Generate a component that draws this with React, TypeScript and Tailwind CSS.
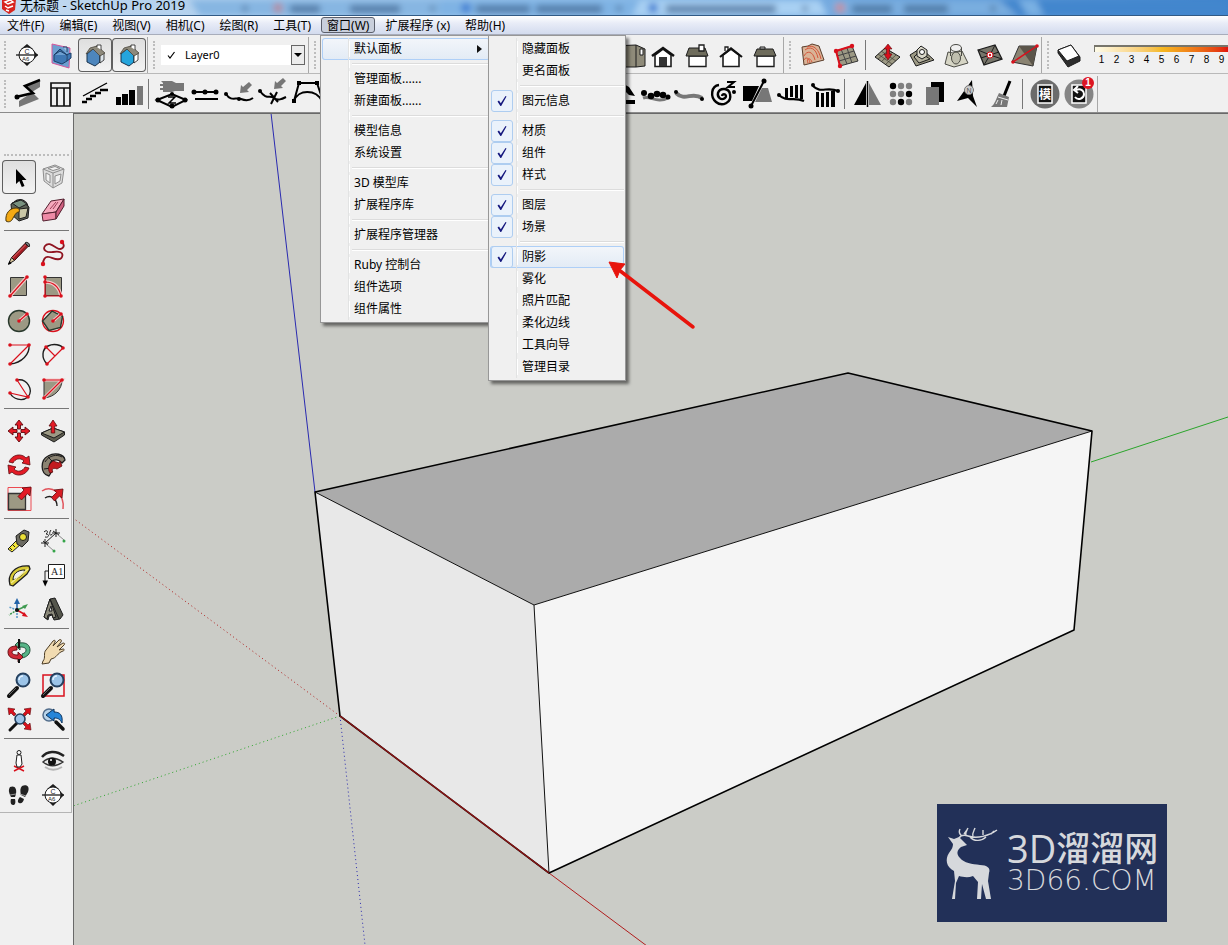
import React from "react";

type IconMap = Record<string, React.ReactNode>;

const RED = "#d9101c";
const STONE = "#9c9984";
const INK = "#1d1d1d";

function Dots({ at, r = 1.8 }: { at: number[][]; r?: number }) {
  return (
    <>
      {at.map(([x, y]) => (
        <circle key={`${x}-${y}`} cx={x} cy={y} r={r} fill={RED} />
      ))}
    </>
  );
}

function Sectioning() {
  return (
    <g>
      <path d="M17 6l6 5H11zM28 17l-5-5v10zM17 28l3-3h-6z" fill={INK} />
      <circle cx="17" cy="17" r="8" fill="#fff" stroke={INK} />
      <path d="M6 17h22" stroke={INK} strokeWidth="1.300" />
      <text x="14.500" y="15.500" fontSize="7" fontFamily="Liberation Sans" fill={INK}>C</text>
      <text x="12" y="23" fontSize="6" fontFamily="Liberation Sans" fill={INK}>A6</text>
    </g>
  );
}

function Home({ body, side }: { body: string; side: string }) {
  return (
    <g strokeLinejoin="round">
      <path d="M15 11 9 16v8l8 4 5-4v-7z" fill={body} stroke="#17324d" />
      <path d="M22 17l4-2v7l-4 3z" fill={side} stroke={INK} strokeWidth=".8" />
      <path d="M12 10l7-2 8 7-5 3-7-7-7 5z" fill="#8d897b" stroke="#4a463c" strokeWidth=".8" />
      <path d="M19 9V7h4v5" fill="#fff" stroke={INK} strokeWidth=".8" />
    </g>
  );
}

function Lens() {
  return (
    <g>
      <path d="M7 28l8-8" stroke="#111" strokeWidth="4" strokeLinecap="round" />
      <path d="M7 27l7-7" stroke="#666" strokeWidth="1" />
      <circle cx="21" cy="12" r="6.500" fill="#9cc4e8" stroke="#24405f" strokeWidth="2" />
      <path d="M17 12a4 4 0 0 1 4-4" stroke="#e6f3ff" strokeWidth="1.500" fill="none" />
    </g>
  );
}

const sideIcons: IconMap = {
  select: <path d="M14 9v15l3.300-3 2.500 6 2.700-1-2.500-6h4.500z" fill="#000" />,
  component: (
    <g fill="#dcdcdc" stroke="#8e8e8e" strokeWidth="1" strokeLinejoin="round">
      <path d="M7 9l12-4 9 4-2 14-9 5-9-7z" />
      <path d="M7 9l10 4 11-4M17 13v15" fill="none" />
      <path d="M10 13l4 2v8l-4-3zM19 16l6-2-1 7-5 3zM12 8.500l7-2 5 2-7 2z" fill="#f3f3f3" />
    </g>
  ),
  bucket: (
    <g strokeLinejoin="round">
      <path d="M12 8c7-5 15-1 14 8" fill="none" stroke={INK} strokeWidth="1.200" />
      <path d="M9 10l9-4 9 7-1 11-9 3-7-6z" fill="#5e6459" stroke={INK} />
      <path d="M17 15l9-1-2 9-7 2z" fill="#c9c7a6" stroke={INK} />
      <path d="M10 9l9-3 6 4-8 4z" fill="#78917f" stroke={INK} />
      <path d="M4 27c-1-8 4-13 10-13 3 0 4 2 3 4-3 0-4 3-6 6-1 3-4 5-7 3z" fill="#f3a914" stroke="#4c3608" />
    </g>
  ),
  eraser: (
    <g stroke="#53202f" strokeLinejoin="round">
      <path d="M6 20l9-13 13-2-8 13z" fill="#f6a9bd" />
      <path d="M6 20l14-2v7L7 27z" fill="#ee8aa6" />
      <path d="M20 18l8-13v7l-8 13z" fill="#cf5f7f" />
      <path d="M14 15l6-7M17 15l5-7" stroke="#9b3c57" />
    </g>
  ),
  pencil: (
    <g strokeLinejoin="round">
      <path d="M9.500 21.500 23 7.500l3 3-13.500 14z" fill="#a51c24" stroke="#3b0d0d" />
      <path d="M10.500 22 24 8.500" stroke="#e06a6a" />
      <path d="M23 7c2-2 6 1 4 4z" fill="#777" stroke={INK} />
      <path d="M6.500 28l3-6.500 3 3z" fill="#d8c39a" stroke={INK} />
      <path d="M6 29l1.500-4 2 2.500z" fill="#000" />
    </g>
  ),
  freehand: (
    <g>
      <path d="M26 6c4 4 0 9-5 6s-9-6-12-2 2 7 8 6 11 0 9 5-9 1-13 0-6 3-6 7" fill="none" stroke="#8f1420" strokeWidth="1.800" />
      <Dots at={[[26, 6], [7, 28]]} r={2.2} />
    </g>
  ),
  rectangle: (
    <g>
      <path d="M8.500 7.500h16v18h-16z" fill={STONE} stroke="#333" />
      <path d="M8 26 25 7" stroke="#f3c9c9" strokeWidth="3.500" />
      <path d="M8 26 25 7" stroke={RED} strokeWidth="1.200" />
      <Dots at={[[8, 26], [25, 7]]} />
    </g>
  ),
  rotated: (
    <g>
      <path d="M9.500 7.500h16v18h-16z" fill={STONE} stroke="#333" />
      <path d="M9 12c9 0 14 5 16 14" fill="none" stroke="#f3c9c9" strokeWidth="3.500" />
      <path d="M9 7v19h16c-2-9-7-14-16-14" fill="none" stroke={RED} strokeWidth="1.200" />
      <Dots at={[[9, 7], [9, 12], [9, 26], [25, 26]]} />
    </g>
  ),
  circle: (
    <g>
      <circle cx="17" cy="17" r="10.500" fill={STONE} stroke="#28382c" strokeWidth="1.400" />
      <path d="M17 17l8-7" stroke="#f3c9c9" strokeWidth="3" />
      <path d="M17 17l8-7" stroke={RED} strokeWidth="1.200" />
      <Dots at={[[17, 17], [25, 10]]} />
    </g>
  ),
  polygon: (
    <g>
      <circle cx="17" cy="17" r="10.500" fill="none" stroke={RED} strokeWidth="1.300" />
      <path d="M16 7l10.500 5.500-2 11L13 26.500 6.500 17z" fill={STONE} stroke="#28382c" strokeWidth="1.400" />
      <path d="M17 17l8-7" stroke="#f3c9c9" strokeWidth="3" />
      <path d="M17 17l8-7" stroke={RED} strokeWidth="1.200" />
      <Dots at={[[17, 17], [25, 10]]} />
    </g>
  ),
  arc: (
    <g fill="none">
      <path d="M27 7c1 9-7 18-19 19" stroke={INK} strokeWidth="1.300" />
      <path d="M8 7h19L8 26" stroke={RED} strokeWidth="1.200" />
      <Dots at={[[8, 7], [27, 7], [8, 26]]} />
    </g>
  ),
  twoPointArc: (
    <g fill="none">
      <path d="M11 26C5 20 6 11 12 8s13-1 15 2" stroke={INK} strokeWidth="1.400" />
      <path d="M27 10 11 26M10 9l9 9" stroke={RED} strokeWidth="1.200" />
      <Dots at={[[10, 9], [27, 10], [11, 26]]} />
    </g>
  ),
  threePointArc: (
    <g fill="none">
      <path d="M15 8c10-2 17 10 11 17-6 5-15 2-18-4" stroke={INK} strokeWidth="1.300" />
      <path d="M15 8l11 17L8 21" stroke={RED} strokeWidth="1.200" />
      <Dots at={[[15, 8], [8, 21], [26, 25]]} />
    </g>
  ),
  pie: (
    <g>
      <path d="M8 8h18c0 9-7 17-18 18z" fill={STONE} stroke="#333" />
      <path d="M8 26 26 8H8" stroke="#f3c9c9" strokeWidth="3" fill="none" />
      <path d="M8 26 26 8H8" stroke={RED} strokeWidth="1.200" fill="none" />
      <Dots at={[[8, 8], [26, 8], [8, 26]]} />
    </g>
  ),
  move: (
    <path
      d="M17 6l4 5h-2.500v4h-3v-4H13zM17 28l-4-5h2.500v-4h3v4H21zM6 17l5-4v2.500h4v3h-4V21zM28 17l-5 4v-2.500h-4v-3h4V13z"
      fill="#e31b26"
      stroke="#5e0a0e"
      strokeWidth=".9"
    />
  ),
  pushPull: (
    <g strokeLinejoin="round">
      <path d="M5.500 19 17 14l11.500 4v3L18 28 5.500 21z" fill="#5f5e50" stroke={INK} />
      <path d="M5.500 19 17 14l11.500 4L18 24z" fill={STONE} stroke={INK} />
      <path d="M17 6l4 6h-2.300v7h-3.400v-7H13z" fill="#e31b26" stroke="#5e0a0e" strokeWidth=".8" />
    </g>
  ),
  rotate: (
    <g fill="#e31b26" stroke="#5e0a0e" strokeWidth=".8" strokeLinejoin="round">
      <path d="M7 14c3-8 13-9 17-4l3-2 1 9-8-2 2-2c-4-4-9-2-11 2z" />
      <path d="M27 20c-3 8-13 9-17 4l-3 2-1-9 8 2-2 2c4 4 9 2 11-2z" />
    </g>
  ),
  followMe: (
    <g strokeLinejoin="round">
      <path d="M13 28C4 26 4 12 12 8c7-4 16-2 17 4l-3 3c-3-4-8-4-11-1-3 4-1 7 1 9z" fill="#8b8372" stroke={INK} strokeWidth="1.300" />
      <path d="M9 14c4-7 12-8 17-5M8 21l7-1M12 9l4 4" fill="none" stroke={INK} />
      <path d="M14 16l3-3 6 2 1-2 2 5-5 3c-4-2-6 1-4 3l-3 1c-2-3-2-6 0-9z" fill="#c21b20" stroke="#5e0a0e" strokeWidth=".8" />
    </g>
  ),
  scale: (
    <g>
      <path d="M6 5.500h23v23H6V5.500" fill="none" stroke="#ec4a52" />
      <path d="M6.500 11.500h17v16h-17z" fill={STONE} stroke="#333" strokeWidth="1.300" />
      <path d="M29 5l-1 9-2.500-2.300-6 6.300-3.500-3.500 6-6.500L20 6z" fill="#e31b26" stroke="#5e0a0e" strokeWidth=".8" />
    </g>
  ),
  offset: (
    <g fill="none">
      <path d="M6 9c9-6 23 2 21 18" stroke="#e1525a" strokeWidth="1.500" />
      <path d="M9 16c6-4 12 1 12 8" stroke={INK} strokeWidth="1.400" />
      <path d="M27 7l-1 9-2.500-2-5 5-3-3.500 5-5L18 8z" fill="#d81c24" stroke="#5e0a0e" strokeWidth=".8" />
    </g>
  ),
  tape: (
    <g strokeLinejoin="round">
      <path d="M15 16l4 4-9 8-4-3z" fill="#f2e53c" stroke={INK} />
      <path d="M14 12l8-6 5 2-1 9-6 6-5-3z" fill="#6b6a62" stroke={INK} />
      <circle cx="21" cy="13" r="3.500" fill="#eade37" stroke={INK} />
      <path d="M8 24l2 2M11 21l2 2" stroke={INK} />
    </g>
  ),
  dimension: (
    <g stroke={INK} fill="none">
      <path d="M9 19 20 9M7 17l5 4M17 7l6 4M20 5v8M9 15v8M16 9h8M5 19h8" />
      <path d="M10 20l8 7M21 10l7 6" stroke="#888" />
      <path d="M8 8c3-3 5 0 2 2 4 0 3 4-1 3M15 6c-3 4 0 7 1 4" />
      <circle cx="18" cy="27" r="1.500" fill="#36a44a" stroke="none" />
      <circle cx="28" cy="17" r="1.500" fill="#36a44a" stroke="none" />
    </g>
  ),
  protractor: (
    <g strokeLinejoin="round">
      <path d="M8 27C5 17 12 7 27 8l1 3-3 5-14 12z" fill="#d9cb36" stroke={INK} strokeWidth="1.300" />
      <path d="M11 22c0-6 4-10 12-10-2 5-6 8-12 10z" fill="#f0f0f0" stroke={INK} />
      <path d="M9 25 26 11" stroke="#f7ef91" strokeWidth="1.200" />
    </g>
  ),
  text: (
    <g>
      <path d="M12.500 6.500h16v14h-16z" fill="#fff" stroke={INK} />
      <text x="15" y="17" fontSize="10" fontFamily="Liberation Serif" fill={INK}>A1</text>
      <path d="M12 13h-3v10" fill="none" stroke={INK} />
      <path d="M6.500 22.500h5.500l-2.800 6z" fill="#000" />
    </g>
  ),
  axes: (
    <g strokeWidth="1.500">
      <path d="M15 18V9" stroke="#2363a8" />
      <path d="M15 6l3 6h-6z" fill="#2363a8" />
      <path d="M15 18l7-3" stroke="#3f9a50" />
      <path d="M26 12l-3 5-3-3z" fill="#3f9a50" />
      <path d="M15 18l7 4" stroke={RED} />
      <path d="M26 25l-6-1 2-4z" fill={RED} />
      <path d="M15 18v9M15 18l-8-3" stroke="#5798c8" strokeDasharray="2 1" />
      <path d="M15 18l-8 5" stroke="#3f9a50" strokeDasharray="2 1" />
      <circle cx="15" cy="18" r="2" fill="#111" />
    </g>
  ),
  text3d: (
    <g strokeLinejoin="round" stroke={INK}>
      <path d="M8 25l6-18 5-1 8 17-3 4-6 1-2-5-3 1-1 4z" fill="#55564c" />
      <path d="M8 25l6-18 6 18-3 1-1-4-4 1-1 4z" fill="#8b897a" />
      <path d="M13 19l2-5 1 5z" fill="#f0f0f0" />
      <path d="M14 7l9 20" fill="none" />
    </g>
  ),
  orbit: (
    <g strokeLinejoin="round">
      <path d="M18 9c6-1 10 2 10 7 0 4-3 7-8 8v-4c3-1 4-2 4-4 0-2-2-3-6-3v3l-5-5 5-5z" fill="#57b487" stroke="#174530" strokeWidth=".9" />
      <path d="M15 12c-6 0-9 2-9 6 0 5 4 7 10 7v3l5-5-5-5v3c-4 0-6-1-6-3 0-1 2-2 5-2z" fill="#cf2a36" stroke="#5e0a0e" strokeWidth=".9" />
      <path d="M17 5v9M17 25v4" stroke="#111" strokeWidth="2" />
    </g>
  ),
  pan: (
    <path
      d="M7 27c3-3 0-8 3-11l7-9c1-1 3-1 2 1l-2 4 6-6c2-1 3 0 2 2l-4 5 6-4c2 0 2 1 1 2l-5 5 4-1c2 0 1 2 0 2-6 2-6 7-12 8l-2 4-7 1z"
      fill="#f1dbb1"
      stroke="#4b3c26"
      strokeLinejoin="round"
    />
  ),
  zoom: <Lens />,
  zoomWindow: (
    <g>
      <path d="M7 7h21v21H7z" fill="none" stroke={RED} strokeWidth="1.500" />
      <Lens />
    </g>
  ),
  zoomExtents: (
    <g>
      <path d="M8 28l7-7" stroke="#111" strokeWidth="3" strokeLinecap="round" />
      <circle cx="18" cy="17" r="5" fill="#9cc4e8" stroke="#24405f" strokeWidth="1.600" />
      <path d="M6 6l7 1-2 2 3 3-2 2-3-3-2 2zM29 6l-7 1 2 2-3 3 2 2 3-3 2 2zM29 28l-7-1 2-2-3-3 2-2 3 3 2-2z" fill={RED} stroke="#5e0a0e" strokeWidth=".6" />
    </g>
  ),
  previous: (
    <g>
      <circle cx="13" cy="13" r="6" fill="#b9d4ea" stroke="#526d8b" strokeWidth="1.500" />
      <path d="M20 20l7 7" stroke="#111" strokeWidth="3.500" strokeLinecap="round" />
      <path d="M10 13l8-6v3c6 0 9 3 8 11-2-4-4-5-8-5v3z" fill="#2685d8" stroke="#113760" strokeLinejoin="round" />
    </g>
  ),
  position: (
    <g>
      <path d="M12 27l10-5M12 22l10 5" stroke={RED} strokeWidth="1.500" />
      <path d="M15 11h4l1 9-2 3h-3l-1-4z" fill="#fff" stroke={INK} />
      <circle cx="17" cy="8.500" r="2" fill="#fff" stroke={INK} />
    </g>
  ),
  look: (
    <g>
      <path d="M6 13c5-6 14-7 22-1" fill="none" stroke="#222" strokeWidth="2.500" />
      <path d="M7 18c5-5 13-5 20 0-7 5-14 5-20 0z" fill="#e4e4e4" stroke="#333" strokeWidth="1.400" />
      <circle cx="16" cy="17.500" r="4" fill="#111" />
      <circle cx="15" cy="16" r="1" fill="#fff" />
      <path d="M9 23c6 4 12 3 17 0" fill="none" stroke="#b5b5b5" strokeWidth="2" />
    </g>
  ),
  walk: (
    <g fill="#222">
      <path d="M8 9c5-2 7 2 6 7l-1 3H9c-2-4-3-7-1-10zM9 21l4 0c1 4 0 6-2 6s-3-3-2-6z" />
      <path d="M20 8c5-2 8 1 6 6l-3 5-4-2c-1-4-1-7 1-9zM18 19l4 2c-1 4-3 5-5 4s-1-4 1-6z" />
      <path d="M8 17l6-1M18 16l6 2" stroke="#999" />
    </g>
  ),
  section: <Sectioning />,
};

const topIcons: IconMap = {
  section: <Sectioning />,
  planes: (
    <g>
      <path d="M8 6l18 4-1 20L8 25z" fill="#6d9fd0" stroke="#d8569a" />
      <path d="M16 11l-6 6v6l8 3 5-3v-6zM22 17l5-2v5l-4 3M10 17l6-4 7 4" fill="#3f78b4" stroke="#1c3f68" />
      <path d="M19 9h4v5" fill="#9cc0df" stroke="#1c3f68" />
    </g>
  ),
  cuts: <Home body="#4d86bd" side="#dce4ea" />,
  fill: <Home body="#25a5dc" side="#fff" />,
  iso: (
    <g>
      <path d="M0 8l24-1 9 4v17l-9 1H0z" fill="#8f8b7a" stroke={INK} />
      <path d="M24 7v22" stroke={INK} />
      <path d="M28 11h3v6h-3z" fill="#fff" stroke={INK} />
    </g>
  ),
  front: (
    <g>
      <path d="M9 17v11.500h16V17l-8-6z" fill="#fff" stroke={INK} strokeWidth="1.600" />
      <path d="M6 18l11-8 11 8" fill="none" stroke="#111" strokeWidth="2.600" />
      <path d="M13 19h8v9h-8z" fill="#333" />
    </g>
  ),
  right: (
    <g>
      <path d="M9 18h17v10.500H9z" fill="#fff" stroke={INK} strokeWidth="1.400" />
      <path d="M9 10h16l3 8H6z" fill="#6e6c5c" stroke={INK} />
      <path d="M19 7h5v6h-5z" fill="#fff" stroke={INK} strokeWidth="1.300" />
    </g>
  ),
  back: (
    <g>
      <path d="M9 17v11.500h16V17l-8-6z" fill="#fff" stroke={INK} strokeWidth="1.600" />
      <path d="M11 13V9h3v3" fill="#fff" stroke={INK} strokeWidth="1.300" />
      <path d="M6 19l11-8.500L28 19" fill="none" stroke="#111" strokeWidth="2.200" />
    </g>
  ),
  left: (
    <g>
      <path d="M9 18h17v10.500H9z" fill="#fff" stroke={INK} strokeWidth="1.400" />
      <path d="M9 11h16l3 7H6z" fill="#6e6c5c" stroke={INK} />
      <path d="M12 9h5v2h-5z" fill="#ccc" stroke={INK} />
    </g>
  ),
  contours: (
    <g strokeLinejoin="round">
      <path d="M7 9l6-1 4-2 7 2 5 14-8 2-12 3z" fill="#d9b397" stroke="#5a3d2b" />
      <path d="M10 12c5-4 11-2 13 8M9 18c3-6 9-5 11 4M13 25c-2-5 2-6 4-1M12 9c7-3 12 3 14 12M9 22c1-3 5-3 6 3" fill="none" stroke="#d5553b" />
    </g>
  ),
  grid: (
    <g>
      <path d="M7 13l16-5 6 15-18 5z" fill={STONE} stroke="#333" />
      <path d="M12 11l6 15M18 10l5 15M8 18l17-5M10 23l17-5" stroke="#444" />
      <path d="M11 28 7 13l16-5" stroke={RED} strokeWidth="2" fill="none" />
      <Dots at={[[7, 13], [23, 8], [11, 28]]} r={2.2} />
    </g>
  ),
  smoove: (
    <g>
      <path d="M4 19l10-9 15 9-11 10z" fill={STONE} stroke={INK} />
      <path d="M7 21l11-9M11 23l10-9M15 26l10-9M7 16l14 10M10 13l15 10" stroke="#3d3b31" strokeWidth=".7" />
      <path d="M17 6l4 5h-2.500v5H21l-4 6-4-6h2.500v-5H13z" fill={RED} stroke="#5e0a0e" strokeWidth=".6" />
    </g>
  ),
  stamp: (
    <g stroke={INK} strokeLinejoin="round">
      <path d="M5 17l11-7 13 12-18 6z" fill={STONE} />
      <path d="M9 19l5-5 11 7-11 4z" fill="#b5b29f" />
      <path d="M12 12l4-4 6 4v6l-5 3-5-3z" fill="#d8d6c8" />
      <circle cx="17" cy="14" r="2.500" fill="#fff" />
    </g>
  ),
  drape: (
    <g stroke="#4a4a44">
      <path d="M9 14l5 1 9-2 6 12-14 4-9-3z" fill="#d6d5c5" />
      <ellipse cx="17" cy="10" rx="5.500" ry="3.500" fill="none" />
      <ellipse cx="17" cy="20" rx="4.500" ry="6" fill="#bfbeae" />
      <path d="M11.500 10v8M22.500 10v8" />
    </g>
  ),
  detail: (
    <g>
      <path d="M5 12l17-5 7 14-18 6z" fill="#77756a" stroke={INK} strokeWidth="1.300" />
      <path d="M17 17 5 12M17 17l5-10M17 17l12 4M17 17l-6 10M8 20l9-3M17 17l9-3" stroke={INK} />
      <circle cx="17" cy="17" r="3" fill="#fff" stroke={RED} />
      <circle cx="17" cy="17" r="1.200" fill={RED} />
    </g>
  ),
  flip: (
    <g>
      <path d="M12 8l18 0-4 20L5 24z" fill="#8a8372" stroke="#333" />
      <path d="M12 8l14 20 4-20z" fill="#5b554a" />
      <path d="M6 24 30 8" stroke={RED} strokeWidth="1.500" />
      <Dots at={[[6, 24], [30, 8]]} />
    </g>
  ),
  shadow: (
    <g strokeLinejoin="round">
      <path d="M5 12 18 7l9 12v4l-12 6L5 15z" fill="#2d2d2d" stroke={INK} />
      <path d="M5 12 18 7l8 11-12 5z" fill="#fff" stroke={INK} />
    </g>
  ),
};

const pluginIcons: IconMap = {
  bend: (
    <g>
      <path d="M9 24v6l20-8-7-7 8-5V4l-14 5 7 6z" fill="#777" />
      <path d="M6 20l17-4-8-7 15-6" fill="none" stroke="#000" strokeWidth="2.500" />
      <circle cx="7" cy="20" r="2.500" />
    </g>
  ),
  window: <path d="M7 6h19v23H7zM7 11h19M13 11v18M20 11v18" fill="none" stroke="#111" strokeWidth="1.700" />,
  stairs: (
    <g fill="none" stroke="#000">
      <path d="M5 19 29 6" strokeWidth="1.400" />
      <path d="M4 25h5M8 22h6M12 19h6M17 16h6M22 13h8" strokeWidth="2.600" />
    </g>
  ),
  bars: (
    <g>
      <path d="M4 20h5v8H4zM10 17h6v11h-6zM17 13h6v15h-6z" />
      <path d="M25 9h6v19h-6z" fill="#777" />
    </g>
  ),
  hand: (
    <g>
      <path d="M7 4h11l4 2h8v8h-9l-3 1H9v-2H6v-2h3V9H6V7h3V6z" fill="#777" />
      <path d="M3 23l15-6 14 6-14 7z" fill="none" stroke="#000" strokeWidth="2" />
      <path d="M14 20h7l-6 6h7" fill="none" stroke="#000" strokeWidth="1.500" />
      <circle cx="4" cy="23" r="2.500" /><circle cx="31" cy="23" r="2.500" /><circle cx="18" cy="29" r="2.500" /><circle cx="18" cy="17" r="2" />
    </g>
  ),
  lines: (
    <g stroke="#000" strokeWidth="2">
      <path d="M5 15h25M7 22h23" />
      <circle cx="6" cy="15" r="1.500" /><circle cx="17" cy="15" r="1.500" /><circle cx="28" cy="15" r="1.500" />
    </g>
  ),
  curve: (
    <g>
      <path d="M4 17c5 8 10 3 15 5s8 2 12-1" fill="none" stroke="#000" strokeWidth="2" />
      <path d="M30 8l-5 5 2 2-9 1 1-8 2 2 6-5z" fill="#777" />
      <circle cx="4" cy="17" r="2" /><circle cx="17" cy="22" r="2" />
    </g>
  ),
  split: (
    <g>
      <path d="M4 14c6 9 10 4 14 7s8 1 12-1M14 16l8 9M21 15l-6 12" fill="none" stroke="#000" strokeWidth="2" />
      <path d="M30 4l-5 5 2 2-9 1 1-8 2 2 6-5z" fill="#777" />
      <circle cx="4" cy="14" r="2" />
    </g>
  ),
  lattice: (
    <g fill="none" stroke="#000" strokeWidth="2">
      <path d="M9 6h18l6 18M9 6 4 24M4 24c4-12 22-12 28 0" />
      <path d="M7 4h4v4H7zM25 4h4v4h-4zM2 22h4v4H2zM31 22h3v4h-3z" fill="#000" stroke="none" />
    </g>
  ),
  fragment: <path d="M18 6l7 4 6 9-6-1-7-7zM22 23h9v4h-9z" />,
  beads: (
    <g>
      <path d="M5 21c7-3 14 6 25 0" fill="none" stroke="#777" strokeWidth="3" />
      <circle cx="6" cy="16" r="3" /><circle cx="13" cy="19" r="3.300" /><circle cx="19" cy="17" r="3.300" /><circle cx="25" cy="18" r="3.300" /><circle cx="30" cy="20" r="2.500" />
    </g>
  ),
  pipe: (
    <g>
      <path d="M4 16c9 9 16-2 26 5" fill="none" stroke="#777" strokeWidth="4" />
      <circle cx="4" cy="15" r="2" /><circle cx="30" cy="22" r="2" />
    </g>
  ),
  spiral: (
    <g fill="none" stroke="#000">
      <path d="M16 19a2 2 0 1 1 3 2c-4 3-8-1-7-5 2-6 11-5 12 1 2 9-8 13-14 8S5 9 13 8" strokeWidth="2.400" />
      <path d="M21 5h7l-6 5h7" strokeWidth="2" />
      <circle cx="28" cy="15" r="2" fill="#000" stroke="none" />
    </g>
  ),
  cut: (
    <g>
      <path d="M3 9h16l-7 15H3z" />
      <path d="M22 11h6l4 14H15z" fill="#777" />
      <path d="M24 4 11 29" stroke="#000" strokeWidth="2" />
      <circle cx="24" cy="4" r="2.500" /><circle cx="11" cy="29" r="2.500" />
    </g>
  ),
  fenceDown: (
    <g>
      <path d="M5 18c8 8 14 1 25 6" fill="none" stroke="#000" strokeWidth="2.200" />
      <path d="M11 11h3v10h-3zM16 9h3v11h-3zM21 8h3v13h-3zM26 8h3v14h-3z" />
      <circle cx="5" cy="18" r="2" />
    </g>
  ),
  fenceUp: (
    <g>
      <path d="M5 9c8 8 14 0 25 5" fill="none" stroke="#000" strokeWidth="2.200" />
      <path d="M8 15h3v15H8zM13 16h3v14h-3zM18 15h3v15h-3zM23 14h4v16h-4z" />
      <circle cx="5" cy="8" r="2" /><circle cx="30" cy="14" r="2" />
    </g>
  ),
  mirror: (
    <g>
      <path d="M16 6v22H4z" />
      <path d="M19 6v22h12z" fill="#777" />
      <path d="M17.500 4v26" stroke="#000" strokeWidth="1.500" />
    </g>
  ),
  dots: (
    <g>
      {[9, 17, 25].map((y, r) =>
        [9, 17, 25].map((x, c) => (
          <circle key={`${x}-${y}`} cx={x} cy={y} r="3.200" fill={[0, 5, 7].includes(r * 3 + c) ? "#000" : "#808080"} />
        )),
      )}
    </g>
  ),
  copy: (
    <g>
      <path d="M13 5h13v20H13z" />
      <path d="M8 10h13v18H8z" fill="#777" />
    </g>
  ),
  north: (
    <g>
      <path d="M20 3l1 16 4 11-9-9-11 3z" />
      <circle cx="17" cy="13" r="4.500" fill="#ccc" stroke="#777" />
      <text x="14.500" y="16" fontSize="7" fontFamily="Liberation Sans" fill="#555">N</text>
    </g>
  ),
  broom: (
    <g>
      <path d="M24 4 18 19" stroke="#000" strokeWidth="3" />
      <path d="M13 16l10 4-2 10H5c4-3 5-8 8-14z" fill="#777" />
      <path d="M12 20l10 3M10 27l2-4M15 28l1-5" stroke="#eee" />
    </g>
  ),
  model: (
    <g>
      <circle cx="17" cy="17" r="14.500" fill="#6b6b6b" />
      <path d="M10 8h14v18H10z" fill="#111" stroke="#fff" strokeWidth="1.500" />
      <text x="11" y="21.500" fontSize="12" fontFamily="Noto Sans CJK SC" fontWeight="700" fill="#fff">模</text>
    </g>
  ),
  reload: (
    <g>
      <circle cx="17" cy="17" r="14.500" fill="#858585" />
      <path d="M10 8h14v18H10z" fill="#111" stroke="#fff" strokeWidth="1.500" />
      <path d="M14 13c5-2 8 1 8 4a5 5 0 0 1-9 3M16 9l-4 4 4 3" fill="none" stroke="#fff" strokeWidth="2" />
    </g>
  ),
};

function Icon({ children }: { children: React.ReactNode }) {
  return (
    <svg viewBox="0 0 34 34" className="size-[34px]" aria-hidden="true">
      {children}
    </svg>
  );
}

function Tools({ names, icons, pressed = [] }: { names: string[]; icons: IconMap; pressed?: string[] }) {
  return (
    <>
      {names.map((n) => (
        <button
          key={n}
          type="button"
          aria-label={n}
          className={
            pressed.includes(n)
              ? "size-[34px] shrink-0 rounded-[4px] bg-linear-to-b from-[#dedede] to-[#f4f4f4] inset-ring inset-ring-[#5f5f5f]"
              : "size-[34px] shrink-0"
          }
        >
          <Icon>{icons[n]}</Icon>
        </button>
      ))}
    </>
  );
}

const Grip = () => (
  <div className="flex w-2.5 shrink-0 justify-center self-stretch py-1">
    <div className="border-l-2 border-dotted border-[#bdbdbd]" />
  </div>
);
const BarEnd = () => <div className="w-0.5 shrink-0 self-stretch border-l border-[#a8a8a8]" />;
const Split = () => <div className="ml-0.5 h-[30px] w-1.5 shrink-0 border-l border-[#777]" />;

const menus = ["文件(F)", "编辑(E)", "视图(V)", "相机(C)", "绘图(R)", "工具(T)", "窗口(W)", "扩展程序 (x)", "帮助(H)"];

const windowMenu = [
  ["默认面板"],
  ["管理面板......", "新建面板......"],
  ["模型信息", "系统设置"],
  ["3D 模型库", "扩展程序库"],
  ["扩展程序管理器"],
  ["Ruby 控制台", "组件选项", "组件属性"],
];
const panelMenu = [
  ["隐藏面板", "更名面板"],
  ["图元信息"],
  ["材质", "组件", "样式"],
  ["图层", "场景"],
  ["阴影", "雾化", "照片匹配", "柔化边线", "工具向导", "管理目录"],
];
const checked = ["图元信息", "材质", "组件", "样式", "图层", "场景", "阴影"];

function Menu({ groups, active, parent = false }: { groups: string[][]; active: string; parent?: boolean }) {
  return (
    <div
      role="menu"
      className="flex flex-col border border-[#979797] bg-[#f0f0f0] px-px py-0.5 shadow-[3px_3px_3px_rgba(0,0,0,0.5)]"
    >
      {groups.map((group, i) => (
        <div key={group[0]} className="flex flex-col">
          {i > 0 && (
            <div className="flex h-2">
              <div className="w-[27px] border-r border-[#e2e3e3]" />
              <div className="flex flex-1 items-center border-l border-white pl-0.5">
                <div className="h-0.5 flex-1 border-t border-b border-t-[#dcdcdc] border-b-white" />
              </div>
            </div>
          )}
          {group.map((label) => {
            const on = checked.includes(label);
            return (
              <button
                key={label}
                type="button"
                role={on ? "menuitemcheckbox" : "menuitem"}
                aria-checked={on ? true : undefined}
                className={
                  label === active
                    ? "flex h-[22px] items-center rounded-[3px] bg-linear-to-b from-[#f3f6fa] to-[#e2ebf5] text-left inset-ring inset-ring-[#aecff7]"
                    : "flex h-[22px] items-center text-left"
                }
              >
                <span className="flex h-full w-[27px] shrink-0 border-r border-[#e2e3e3]">
                  {on && (
                    <span className="ml-px flex size-[22px] items-center justify-center rounded-[3px] border border-[#aecdf0] bg-[#eaf2fb]">
                      <svg viewBox="0 0 12 12" className="size-3" aria-hidden="true">
                        <path d="M1.500 6.500 3 5.500l1.800 2.800L9.500 1l1 .6L5.200 11h-.8z" fill="#15187e" />
                      </svg>
                    </span>
                  )}
                </span>
                <span className="flex-1 border-l border-white pl-1 whitespace-nowrap">{label}</span>
                {parent && label === active && (
                  <svg viewBox="0 0 5 8" className="mr-2 h-2 w-[5px]" aria-hidden="true">
                    <path d="M0 0l5 4-5 4z" fill="#111" />
                  </svg>
                )}
              </button>
            );
          })}
        </div>
      ))}
    </div>
  );
}

function TitleBar() {
  return (
    <header className="relative flex h-4 items-end overflow-hidden border-b border-[#315a85] bg-linear-to-r from-[#c4daf0] via-[#8dbce8] to-[#3f84cd]">
      <svg className="absolute inset-0 size-full" viewBox="0 0 1228 15" preserveAspectRatio="none" aria-hidden="true">
        <defs>
          <filter id="soft" x="-5%" y="-100%" width="110%" height="300%">
            <feGaussianBlur stdDeviation="3" />
          </filter>
        </defs>
        <g filter="url(#soft)">
          <path d="M190 0h250v16H200z" fill="#86b6e2" />
          <path d="M440 0h200v16H440z" fill="#7fb3e4" />
          <path d="M640 0h180l8 16H632z" fill="#a8d0f3" />
          <path d="M828 0h170l20 16H836z" fill="#79addf" />
          <path d="M1000 0h228v16h-210z" fill="#4286cd" />
          <path d="M1018 0h18l8 16h-16z" fill="#79b0e3" />
          <g fill="#3f6590" opacity=".7">
            <path d="M290 5h30v8h-30zM350 5h50v8h-50zM476 5h54v8h-54zM536 5h66v8h-66zM666 5h110v8H666zM852 5h40v8h-40zM904 5h44v8h-44z" />
            <path d="M242 6h6v5h-6zM430 6h5v5h-5zM616 6h6v5h-6zM802 6h6v5h-6zM990 6h6v5h-6z" />
          </g>
          <circle cx="278" cy="8" r="5" fill="#b48c9f" />
          <circle cx="466" cy="8" r="5" fill="#3f7fd3" />
          <circle cx="653" cy="8" r="5" fill="#3f7fd3" />
          <circle cx="840" cy="8" r="5" fill="#c58f9d" />
        </g>
      </svg>
      <div className="relative flex h-5 items-center gap-1 pl-0.5">
        <svg viewBox="0 0 14 18" className="h-[18px] w-3.5" aria-hidden="true">
          <path d="M0 3l8-3 6 3-1 11-6 4-7-5z" fill="#d8241f" />
          <path d="M3 6l5-2 3 2-5 2zM3 10l3 2 5-2M4 14l3 1" fill="none" stroke="#fff" strokeWidth="1.500" />
        </svg>
        <h1 className="text-[13px] leading-5 whitespace-nowrap text-black">无标题 - SketchUp Pro 2019</h1>
      </div>
    </header>
  );
}

function MenuBar() {
  return (
    <nav className="relative z-10 flex h-[19px] items-stretch gap-px border-b border-[#a8adbb] bg-linear-to-b from-white via-[#e8ecf7] via-40% to-[#d3dbee] pt-px pb-px">
      {menus.map((m) =>
        m === "窗口(W)" ? (
          <div key={m} className="relative mx-0.5 flex">
            <button type="button" className="rounded-[3px] border border-[#5b5f6b] bg-[#c9cfdc] px-[5px] leading-4">
              {m}
            </button>
            <div className="absolute top-[18px] -left-px w-[172px]">
              <Menu groups={windowMenu} active="默认面板" parent />
              <div className="absolute top-0 left-[168px] w-[138px]">
                <Menu groups={panelMenu} active="阴影" />
                <svg
                  viewBox="0 0 90 72"
                  className="pointer-events-none absolute top-[224px] left-[119px] h-[72px] w-[90px]"
                  aria-hidden="true"
                >
                  <path d="M86 68 12 11" stroke="#e8140c" strokeWidth="3.500" strokeLinecap="round" />
                  <path d="M2 3l16 2-5 6-3 8z" fill="#e8140c" stroke="#e8140c" strokeLinejoin="round" />
                </svg>
              </div>
            </div>
          </div>
        ) : (
          <button key={m} type="button" className="px-[7px] leading-[18px] whitespace-nowrap">
            {m}
          </button>
        ),
      )}
    </nav>
  );
}

function TopBars() {
  return (
    <div className="border-b border-[#8b8b8b]">
      <div className="flex h-[39px] items-center overflow-hidden border-b border-[#b9b9b9] pt-0.5">
        <Grip />
        <Tools names={["section", "planes", "cuts", "fill"]} icons={topIcons} pressed={["cuts", "fill"]} />
        <div className="w-px shrink-0" />
        <BarEnd />
        <Grip />
        <label className="relative ml-0.5 flex h-5 w-36 shrink-0 items-center bg-white">
          <svg viewBox="0 0 8 8" className="absolute left-1.5 size-2" aria-hidden="true">
            <path d="M1 4.500 3 7l4.500-6" fill="none" stroke="#000" strokeWidth="1.200" />
          </svg>
          <select aria-label="图层" className="h-5 w-full appearance-none pl-6 font-[Noto_Sans] text-[11px] leading-5">
            <option>Layer0</option>
          </select>
          <span className="pointer-events-none absolute right-0 flex h-5 w-3.5 items-center justify-center border border-[#666] bg-[#ececec]">
            <svg viewBox="0 0 8 4" className="h-1 w-2" aria-hidden="true">
              <path d="M0 0h8L4 4z" />
            </svg>
          </span>
        </label>
        <div className="w-[3px] shrink-0" />
        <BarEnd />
        <Grip />
        <div className="w-[292px] shrink-0" />
        <Tools names={["iso", "front", "right", "back", "left"]} icons={topIcons} />
        <div className="w-px shrink-0" />
        <BarEnd />
        <Grip />
        <Tools names={["contours", "grid"]} icons={topIcons} />
        <Split />
        <Tools names={["smoove", "stamp", "drape", "detail", "flip"]} icons={topIcons} />
        <BarEnd />
        <Grip />
        <Tools names={["shadow"]} icons={topIcons} />
        <div className="ml-[7px] min-w-0 flex-1 overflow-hidden">
          <div className="h-[7px] border-t-2 border-l border-[#77756b] bg-linear-to-r from-[#fdfbe8] via-[#f5b921] to-[#e00f0f]" />
          <div className="flex pt-0.5 font-[Liberation_Sans] text-[10px] leading-3 font-medium">
            {[1, 2, 3, 4, 5, 6, 7, 8, 9].map((n) => (
              <span key={n} className="w-[15px] shrink-0 text-center">
                {n}
              </span>
            ))}
          </div>
        </div>
      </div>
      <div className="flex h-[38px] items-center overflow-hidden pt-0.5">
        <Grip />
        <Tools names={["bend", "window", "stairs", "bars"]} icons={pluginIcons} />
        <Split />
        <Tools names={["hand", "lines", "curve", "split", "lattice"]} icons={pluginIcons} />
        <div className="w-[280px] shrink-0" />
        <Tools names={["fragment", "beads", "pipe", "spiral", "cut", "fenceDown", "fenceUp"]} icons={pluginIcons} />
        <Split />
        <Tools names={["mirror", "dots", "copy", "north", "broom"]} icons={pluginIcons} />
        <Split />
        <Tools names={["model"]} icons={pluginIcons} />
        <div className="relative flex shrink-0">
          <Tools names={["reload"]} icons={pluginIcons} />
          <span className="absolute top-0 right-0.5 flex size-3 items-center justify-center rounded-full bg-[#dc1522] font-[Liberation_Sans] text-[10px] leading-3 font-bold text-white">
            1
          </span>
        </div>
        <div className="w-px shrink-0" />
        <BarEnd />
      </div>
    </div>
  );
}

const sideGroups = [
  ["select", "component", "bucket", "eraser"],
  ["pencil", "freehand", "rectangle", "rotated", "circle", "polygon", "arc", "twoPointArc", "threePointArc", "pie"],
  ["move", "pushPull", "rotate", "followMe", "scale", "offset"],
  ["tape", "dimension", "protractor", "text", "axes", "text3d"],
  ["orbit", "pan", "zoom", "zoomWindow", "zoomExtents", "previous"],
  ["position", "look", "walk", "section"],
];

function SideBar() {
  return (
    <aside className="w-[73px] shrink-0 pt-[37px]">
      <div className="mr-px border-r border-b border-[#b5b5b5] pl-0.5">
        <div className="flex h-2.5 items-center px-0.5">
          <div className="flex-1 border-t-2 border-dotted border-[#bdbdbd]" />
        </div>
        {sideGroups.map((g, i) => (
          <div key={g[0]}>
            {i > 0 && (
              <div className="h-2 px-0.5 pt-0.5">
                <div className="border-t border-[#777]" />
              </div>
            )}
            <div className="flex w-[68px] flex-wrap">
              <Tools names={g} icons={sideIcons} pressed={["select"]} />
            </div>
          </div>
        ))}
      </div>
    </aside>
  );
}

function Scene() {
  return (
    <svg
      viewBox="74 114 1154 831"
      preserveAspectRatio="xMinYMin slice"
      className="absolute inset-0 size-full"
      role="img"
      aria-label="model"
    >
      <g fill="none" strokeWidth="1">
        <path d="M271 113l44 379" stroke="#2a2ab0" />
        <path d="M340 716l25 229" stroke="#2a2ab0" strokeDasharray="1 3" />
        <path d="M1091 462l137-45" stroke="#2ba52b" />
        <path d="M340 716 73 806" stroke="#2ba52b" strokeDasharray="1 3" />
        <path d="M340 716 73 518" stroke="#b01c1c" strokeDasharray="1 3" />
        <path d="M549 873l98 73" stroke="#b01c1c" />
      </g>
      <path d="M315 492 848 373l244 58-558 174z" fill="#ababab" />
      <path d="M315 492l219 113 15 268-209-157z" fill="#e8e8e8" />
      <path d="M534 605l558-174-18 199-525 243z" fill="#f5f5f5" />
      <path d="M315 492l219 113 558-174M534 605l15 268" fill="none" stroke="#111" />
      <path d="M315 492 848 373l244 58-18 199-525 243-209-157z" fill="none" stroke="#000" strokeWidth="1.600" strokeLinejoin="round" />
      <path d="M340 716l209 157" stroke="#8c1414" strokeWidth="1.400" />
    </svg>
  );
}

function Watermark() {
  return (
    <div className="absolute right-[61px] bottom-[23px] flex h-[118px] w-[230px] items-center gap-2 bg-[#223058] pl-2 text-[#d6d8dc]">
      <svg viewBox="0 0 54 72" className="h-[72px] w-[54px] shrink-0" aria-hidden="true">
        <path
          d="M3 10l6 2 5-2 4 4 4 4-6 2c-4 3-5 7-1 11 4 5 12 6 20 7 7 0 11 3 9 8l-1 8 3 18h-5l-4-15-1 15h-4l1-17-5-6c-5 2-10 1-14 0l-3 7-1 16H7l3-18-1-10C1 40 0 32 4 26c3-4 4-6 4-9z"
          fill="currentColor"
        />
        <path
          d="M14 11c2-3 6-3 9-2 9 3 21 0 29-6M17 9c-3-2-3-5-2-7M21 9c-1-4 1-6 2-8M28 9c-1-3 1-5 2-8M25 10c4 5 12 4 16 0M38 8V3M46 7l3-3M19 7l3-4"
          fill="none"
          stroke="currentColor"
          strokeWidth="1.400"
        />
      </svg>
      <div className="flex flex-col">
        <div className="flex h-9 items-center whitespace-nowrap">
          <span className="font-[Open_Sans,sans-serif] text-[38px] leading-9 font-medium">3D</span>
          <span className="text-[34px] leading-9 font-medium">溜溜网</span>
        </div>
        <span className="font-[DejaVu_Sans,sans-serif] text-[28px] leading-[30px] font-extralight">3D66.COM</span>
      </div>
    </div>
  );
}

export default function App() {
  return (
    <div className="flex min-h-screen flex-col bg-[#f0f0f0] font-['Noto_Sans','Noto_Sans_CJK_SC',sans-serif] text-xs text-black">
      <TitleBar />
      <MenuBar />
      <TopBars />
      <div className="flex flex-1">
        <SideBar />
        <main className="relative flex-1 overflow-hidden border-t border-l border-[#696969] bg-[#cbccc7]">
          <Scene />
          <Watermark />
        </main>
      </div>
    </div>
  );
}
